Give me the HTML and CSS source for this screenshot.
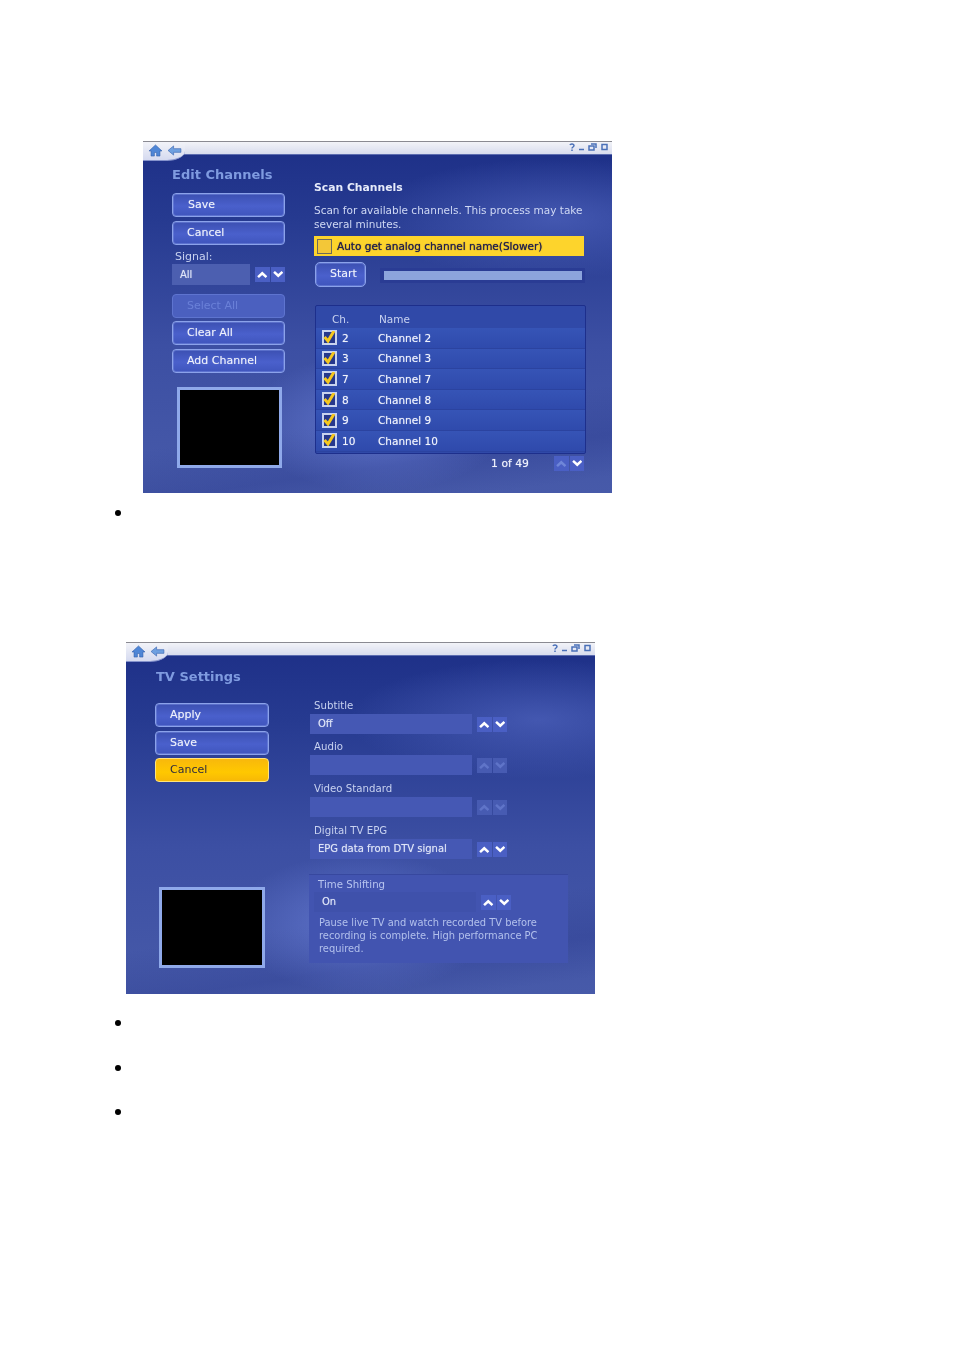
FILE: index.html
```html
<!DOCTYPE html>
<html lang="en">
<head>
  <meta charset="UTF-8">
  <title>TV Settings</title>
  <link rel="stylesheet" href="styles.css">
</head>
<body>
  <svg class="defs" width="0" height="0">
    <symbol id="up" viewBox="0 0 10 8"><path d="M1 6.500 5 2.800l4 3.700" fill="none" stroke="currentColor" stroke-width="2.400"/></symbol>
    <symbol id="down" viewBox="0 0 10 8"><path d="M1 1.500 5 5.200l4-3.700" fill="none" stroke="currentColor" stroke-width="2.400"/></symbol>
    <symbol id="tick" viewBox="0 0 12 12"><path d="M1.500 6 5 10 11 0" fill="none" stroke="#f6c81e" stroke-width="3"/></symbol>
    <symbol id="home" viewBox="0 0 16 14"><path d="M8 1 1 7.500h2.200V13h3.600V9.200h2.400V13h3.600V7.500H15z" fill="#4f86d6" stroke="#2c5aa8" stroke-width=".6"/></symbol>
    <symbol id="back" viewBox="0 0 16 12"><path d="M7 1 1 6l6 5V8h8V4H7z" fill="#6fa0e0" stroke="#3a66b0" stroke-width=".7"/></symbol>
    <symbol id="controls" viewBox="0 0 40 8"><path d="M1 2C1.500.5 5 .5 5 2.500 5 4 3 4 3 5.500M3 6.500V8M10 6.500h5M20 3h5v4h-5zM22 1h5v4M33 1.500h5v5h-5z" fill="none" stroke="#4a70b8" stroke-width="1.500"/></symbol>
  </svg>

  <div class="shot shot-channels">
    <div class="titlebar">
      <span class="nav">
        <svg class="ico-home"><use href="#home"/></svg>
        <svg class="ico-back"><use href="#back"/></svg>
      </span>
      <svg class="ico-controls"><use href="#controls"/></svg>
    </div>
    <div class="win-body">
      <div class="side">
        <h2 class="win-title">Edit Channels</h2>
        <div class="btn-stack">
          <div class="btn pad-save">Save</div>
          <div class="btn">Cancel</div>
        </div>
        <div class="signal-label">Signal:</div>
        <div class="signal-row">
          <div class="select select-signal">All</div>
          <div class="arrows"><svg><use href="#up"/></svg><svg><use href="#down"/></svg></div>
        </div>
        <div class="btn-stack stack-actions">
          <div class="btn btn-off">Select All</div>
          <div class="btn">Clear All</div>
          <div class="btn">Add Channel</div>
        </div>
        <div class="preview preview-channels"></div>
      </div>
      <div class="main main-channels">
        <h3 class="scan-title">Scan Channels</h3>
        <p class="scan-desc">Scan for available channels. This process may take several minutes.</p>
        <div class="auto-bar"><span class="auto-box"></span>Auto get analog channel name(Slower)</div>
        <div class="start-row">
          <div class="btn btn-start">Start</div>
          <div class="progress"><div class="progress-fill"></div></div>
        </div>
        <div class="list">
          <div class="list-head"><span class="col-ch">Ch.</span><span>Name</span></div>
          <div class="row"><span class="check"><svg><use href="#tick"/></svg></span><span class="num">2</span><span>Channel 2</span></div>
          <div class="row"><span class="check"><svg><use href="#tick"/></svg></span><span class="num">3</span><span>Channel 3</span></div>
          <div class="row"><span class="check"><svg><use href="#tick"/></svg></span><span class="num">7</span><span>Channel 7</span></div>
          <div class="row"><span class="check"><svg><use href="#tick"/></svg></span><span class="num">8</span><span>Channel 8</span></div>
          <div class="row"><span class="check"><svg><use href="#tick"/></svg></span><span class="num">9</span><span>Channel 9</span></div>
          <div class="row"><span class="check"><svg><use href="#tick"/></svg></span><span class="num">10</span><span>Channel 10</span></div>
        </div>
        <div class="pager">
          <span class="pager-text">1 of 49</span>
          <div class="arrows arrows-half"><svg class="dim"><use href="#up"/></svg><svg><use href="#down"/></svg></div>
        </div>
      </div>
    </div>
  </div>

  <ul class="bullets bullets-one">
    <li>&nbsp;</li>
  </ul>

  <div class="shot shot-settings">
    <div class="titlebar">
      <span class="nav">
        <svg class="ico-home"><use href="#home"/></svg>
        <svg class="ico-back"><use href="#back"/></svg>
      </span>
      <svg class="ico-controls"><use href="#controls"/></svg>
    </div>
    <div class="win-body">
      <div class="side side-settings">
        <h2 class="win-title title-settings">TV Settings</h2>
        <div class="btn-stack stack-settings">
          <div class="btn btn-left">Apply</div>
          <div class="btn btn-left">Save</div>
          <div class="btn btn-left btn-yellow">Cancel</div>
        </div>
        <div class="preview preview-settings"></div>
      </div>
      <div class="main main-settings">
        <div class="field-label">Subtitle</div>
        <div class="field">
          <div class="select">Off</div>
          <div class="arrows"><svg><use href="#up"/></svg><svg><use href="#down"/></svg></div>
        </div>
        <div class="field-label gap-s">Audio</div>
        <div class="field">
          <div class="select"></div>
          <div class="arrows arrows-off"><svg><use href="#up"/></svg><svg><use href="#down"/></svg></div>
        </div>
        <div class="field-label gap-m">Video Standard</div>
        <div class="field">
          <div class="select"></div>
          <div class="arrows arrows-off"><svg><use href="#up"/></svg><svg><use href="#down"/></svg></div>
        </div>
        <div class="field-label gap-m">Digital TV EPG</div>
        <div class="field">
          <div class="select">EPG data from DTV signal</div>
          <div class="arrows"><svg><use href="#up"/></svg><svg><use href="#down"/></svg></div>
        </div>
        <div class="panel">
          <div class="panel-label">Time Shifting</div>
          <div class="field">
            <div class="select select-dark">On</div>
            <div class="arrows"><svg><use href="#up"/></svg><svg><use href="#down"/></svg></div>
          </div>
          <p class="panel-desc">Pause live TV and watch recorded TV before recording is complete. High performance PC required.</p>
        </div>
      </div>
    </div>
  </div>

  <ul class="bullets bullets-three">
    <li>&nbsp;</li>
    <li>&nbsp;</li>
    <li>&nbsp;</li>
  </ul>
</body>
</html>
```

FILE: styles.css
```css
body {
  margin: 0;
  background: #fff;
  font-family: "DejaVu Sans", sans-serif;
}

.defs {
  position: absolute;
}

/* screenshots */
.shot {
  width: 469px;
  height: 352px;
  display: flex;
  flex-direction: column;
  color: #e6ebfa;
  filter: blur(0.55px);
  background:
    radial-gradient(ellipse 130px 70px at 50% 80%, rgba(104, 125, 215, 0.75), transparent),
    radial-gradient(ellipse 190px 60px at 88% 22%, rgba(80, 100, 190, 0.7), transparent),
    linear-gradient(172deg, transparent 74%, rgba(40, 56, 140, 0.35) 86%, transparent 96%),
    linear-gradient(180deg, #1d2f87 0%, #263a90 22%, #3c4fa3 58%, #475aa9 100%);
}

.shot-channels {
  margin: 141px 0 0 143px;
}

.shot-settings {
  margin: 0 0 0 126px;
}

.titlebar {
  position: relative;
  height: 14px;
  box-sizing: border-box;
  border-top: 1px solid #8a8a92;
  border-bottom: 1px solid #5c6cb0;
  background: linear-gradient(180deg, #f2f3f8, #d8dcee);
}

.nav {
  position: absolute;
  left: 0;
  top: 0;
  width: 42px;
  height: 18px;
  background: linear-gradient(180deg, #f2f3f8, #d5daf0);
  border-bottom-right-radius: 18px 10px;
  border-bottom: 1px solid #8492cc;
  z-index: 1;
}

.ico-home {
  position: absolute;
  left: 5px;
  top: 2px;
  width: 15px;
  height: 13px;
}

.ico-back {
  position: absolute;
  left: 24px;
  top: 3px;
  width: 15px;
  height: 11px;
}

.ico-controls {
  position: absolute;
  right: 3px;
  top: 1px;
  width: 40px;
  height: 8px;
}

.win-body {
  display: flex;
  flex: 1;
}

.side {
  width: 142px;
  padding: 10px 0 0 29px;
  flex: none;
}

.side-settings {
  width: 154px;
  padding-top: 11px;
}

.win-title {
  margin: 0;
  font-size: 13px;
  line-height: 20px;
  font-weight: bold;
  color: #7f9be0;
}

.title-settings {
  margin-left: 1px;
}

/* buttons */
.btn-stack {
  margin-top: 8px;
  display: flex;
  flex-direction: column;
  gap: 3.500px;
  width: 113px;
}

.stack-actions {
  margin-top: 9px;
}

.stack-settings {
  margin-top: 16px;
  width: 114px;
}

.btn {
  height: 24px;
  box-sizing: border-box;
  padding-left: 14px;
  border: 1px solid #8ba2ea;
  border-radius: 4px;
  box-shadow: inset 0 0 0 1px rgba(120, 142, 225, 0.5);
  background: linear-gradient(180deg, #3c50b2 0%, #4a60cc 55%, #3f55bd 100%);
  font-size: 11px;
  line-height: 21px;
  color: #eef1fc;
  text-shadow: 0 0 1px rgba(238, 241, 252, 0.5);
}

.pad-save {
  padding-left: 15px;
}

.btn-off {
  background: #4b60bf;
  border-color: #5e74cf;
  box-shadow: none;
  color: #6a80d8;
  text-shadow: none;
}

.btn-yellow {
  border-color: #ffe37a;
  box-shadow: none;
  background: linear-gradient(180deg, #f8b80c 0%, #ffc800 60%, #f7b806 100%);
  color: #2e2a40;
  text-shadow: none;
}

.btn-start {
  width: 51px;
  height: 25px;
  line-height: 22px;
  border-radius: 5px;
}

/* selects */
.signal-label {
  margin: 4px 0 0 3px;
  font-size: 11px;
  line-height: 15px;
  color: #c8d2f0;
}

.signal-row {
  display: flex;
  width: 113px;
}

.select {
  width: 162px;
  height: 20px;
  box-sizing: border-box;
  padding-left: 8px;
  background: #4558b4;
  font-size: 10px;
  line-height: 19px;
  color: #dfe5f8;
  text-shadow: 0 0 1px rgba(223, 229, 248, 0.6);
}

.select-signal {
  width: 79px;
  height: 21px;
  line-height: 21px;
  background: #4c5fb0;
}

.select-dark {
  background: #3f51ab;
}

.arrows {
  margin-left: 5px;
  width: 30px;
  height: 15px;
  margin-top: 3px;
  display: flex;
  gap: 1px;
  color: #fff;
}

.arrows svg {
  flex: 1;
  height: 15px;
  padding: 3px 2px;
  box-sizing: border-box;
  background: #4a5fc4;
}

.arrows-off {
  color: #5f74c8;
}

.arrows-off svg {
  background: #475bb2;
}

.arrows .dim {
  color: #6f86d8;
}

/* scan channels */
.main {
  flex: 1;
}

.main-channels {
  padding-top: 26px;
}

.scan-title {
  margin: 0;
  font-size: 10.800px;
  line-height: 14px;
  font-weight: bold;
  color: #e6ebfa;
}

.scan-desc {
  margin: 8px 0 0;
  width: 272px;
  font-size: 10.500px;
  line-height: 14px;
  color: #cfd8f4;
}

.auto-bar {
  margin-top: 5px;
  width: 270px;
  height: 20px;
  display: flex;
  align-items: center;
  gap: 5px;
  padding-left: 3px;
  box-sizing: border-box;
  background: #fdd42c;
  font-size: 10.500px;
  color: #23204a;
  text-shadow: 0 0 1px #23204a;
}

.auto-box {
  width: 15px;
  height: 15px;
  box-sizing: border-box;
  border: 1px solid #6f6a58;
  background: #f3c738;
}

.start-row {
  margin: 6px 0 0 1px;
  display: flex;
  gap: 14px;
  width: 270px;
}

.progress {
  flex: 1;
  height: 15px;
  margin-top: 6px;
  padding: 3px 3px 3px 4px;
  box-sizing: border-box;
  background: #2a3c94;
}

.progress-fill {
  height: 100%;
  background: #8ca4dc;
}

/* channel list */
.list {
  margin: 18px 0 0 1px;
  width: 271px;
  height: 149px;
  box-sizing: border-box;
  border: 1px solid #1d2f8c;
  border-radius: 2px;
  background: #3049a8;
}

.list-head {
  height: 22px;
  display: flex;
  padding-left: 16px;
  font-size: 10.500px;
  line-height: 27px;
  color: #c8d2f0;
}

.col-ch {
  width: 47px;
}

.row {
  height: 20.600px;
  display: flex;
  align-items: center;
  box-sizing: border-box;
  border-bottom: 1px solid #2b43a0;
  background: linear-gradient(180deg, #3654b6, #2f4aac);
  font-size: 10.500px;
  color: #f0f3fd;
  text-shadow: 0 0 1px rgba(240, 243, 253, 0.6);
}

.check {
  width: 15px;
  height: 15px;
  margin-left: 6px;
  box-sizing: border-box;
  border: 2px solid #c9d3ee;
  background: #27388c;
  display: flex;
}

.check svg {
  width: 12px;
  height: 12px;
  margin: -1px;
}

.num {
  width: 36px;
  margin-left: 5px;
}

.pager {
  width: 270px;
  display: flex;
  justify-content: flex-end;
}

.pager-text {
  margin: 2px 25px 0 0;
  font-size: 10.800px;
  line-height: 15px;
  color: #f0f3fd;
  text-shadow: 0 0 1px rgba(240, 243, 253, 0.6);
}

.arrows-half {
  margin-top: 2px;
  margin-left: 0;
}

/* tv settings */
.preview {
  box-sizing: border-box;
  border: 3px solid #8fa9ea;
  background: #000;
}

.preview-channels {
  margin: 14px 0 0 5px;
  width: 105px;
  height: 81px;
}

.preview-settings {
  margin: 105px 0 0 4px;
  width: 106px;
  height: 81px;
}

.main-settings {
  padding-top: 41px;
}

.main-settings > .field {
  margin-left: 1px;
}

.field-label {
  margin-left: 5px;
  font-size: 10.200px;
  line-height: 17px;
  color: #c8d2f0;
}

.gap-s {
  margin-top: 4px;
}

.gap-m {
  margin-top: 5px;
}

.field {
  display: flex;
}

.panel {
  margin-top: 15px;
  width: 259px;
  height: 89px;
  box-sizing: border-box;
  padding: 3px 5px 0;
  background: #4254b0;
  border-top: 1px solid #37489f;
}

.panel-label {
  margin-left: 4px;
  font-size: 10.200px;
  line-height: 14px;
  color: #b8c5f0;
}

.panel-desc {
  margin: 4px 0 0 5px;
  font-size: 9.900px;
  line-height: 13px;
  color: #b2c0ec;
}

/* bullet lists */
.bullets {
  margin: 0;
  padding-left: 134px;
  font-family: "Liberation Serif", serif;
  font-size: 16px;
}

.bullets li::marker {
  font-size: 20px;
}

.bullets-one {
  height: 149px;
  padding-top: 8px;
  box-sizing: border-box;
}

.bullets-three {
  padding-top: 17px;
}

.bullets-three li {
  height: 44.500px;
}
```
